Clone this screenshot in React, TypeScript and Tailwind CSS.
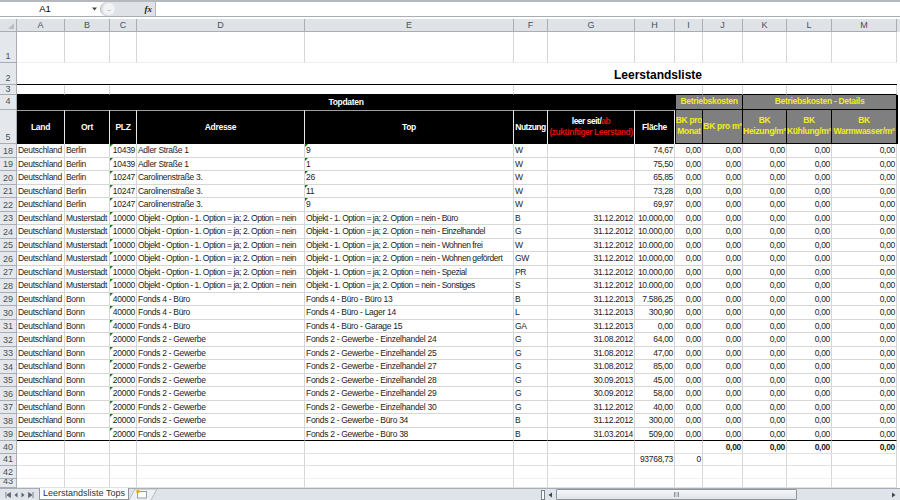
const COLS = ["A", "B", "C", "D", "E", "F", "G", "H", "I", "J", "K", "L", "M"];

const OPT = "Objekt - Option - 1. Option = ja; 2. Option = nein";
const OPT_TOP = "Objekt - 1. Option = ja; 2. Option = nein - ";

// nr, ort, plz, adresse, top, nutzung, leer seit, flaeche
const ROWS: [number, string, string, string, string, string, string, string][] = [
  [18, "Berlin", "10439", "Adler Straße 1", "9", "W", "", "74,67"],
  [19, "Berlin", "10439", "Adler Straße 1", "1", "W", "", "75,50"],
  [20, "Berlin", "10247", "Carolinenstraße 3.", "26", "W", "", "65,85"],
  [21, "Berlin", "10247", "Carolinenstraße 3.", "11", "W", "", "73,28"],
  [22, "Berlin", "10247", "Carolinenstraße 3.", "9", "W", "", "69,97"],
  [23, "Musterstadt", "10000", OPT, OPT_TOP + "Büro", "B", "31.12.2012", "10.000,00"],
  [24, "Musterstadt", "10000", OPT, OPT_TOP + "Einzelhandel", "G", "31.12.2012", "10.000,00"],
  [25, "Musterstadt", "10000", OPT, OPT_TOP + "Wohnen frei", "W", "31.12.2012", "10.000,00"],
  [26, "Musterstadt", "10000", OPT, OPT_TOP + "Wohnen gefördert", "GW", "31.12.2012", "10.000,00"],
  [27, "Musterstadt", "10000", OPT, OPT_TOP + "Spezial", "PR", "31.12.2012", "10.000,00"],
  [28, "Musterstadt", "10000", OPT, OPT_TOP + "Sonstiges", "S", "31.12.2012", "10.000,00"],
  [29, "Bonn", "40000", "Fonds 4 - Büro", "Fonds 4 - Büro - Büro 13", "B", "31.12.2013", "7.586,25"],
  [30, "Bonn", "40000", "Fonds 4 - Büro", "Fonds 4 - Büro - Lager 14", "L", "31.12.2013", "300,90"],
  [31, "Bonn", "40000", "Fonds 4 - Büro", "Fonds 4 - Büro - Garage 15", "GA", "31.12.2013", "0,00"],
  [32, "Bonn", "20000", "Fonds 2 - Gewerbe", "Fonds 2 - Gewerbe - Einzelhandel 24", "G", "31.08.2012", "64,00"],
  [33, "Bonn", "20000", "Fonds 2 - Gewerbe", "Fonds 2 - Gewerbe - Einzelhandel 25", "G", "31.08.2012", "47,00"],
  [34, "Bonn", "20000", "Fonds 2 - Gewerbe", "Fonds 2 - Gewerbe - Einzelhandel 27", "G", "31.08.2012", "85,00"],
  [35, "Bonn", "20000", "Fonds 2 - Gewerbe", "Fonds 2 - Gewerbe - Einzelhandel 28", "G", "30.09.2013", "45,00"],
  [36, "Bonn", "20000", "Fonds 2 - Gewerbe", "Fonds 2 - Gewerbe - Einzelhandel 29", "G", "30.09.2012", "58,00"],
  [37, "Bonn", "20000", "Fonds 2 - Gewerbe", "Fonds 2 - Gewerbe - Einzelhandel 30", "G", "31.12.2012", "40,00"],
  [38, "Bonn", "20000", "Fonds 2 - Gewerbe", "Fonds 2 - Gewerbe - Büro 34", "B", "31.12.2012", "300,00"],
  [39, "Bonn", "20000", "Fonds 2 - Gewerbe", "Fonds 2 - Gewerbe - Büro 38", "B", "31.03.2014", "509,00"],
];

function RowNo({ n, end = true, flush }: { n: number; end?: boolean; flush?: boolean }) {
  return (
    <div
      className={`flex justify-center border-r border-b border-[#a9aeb4] bg-[#e4e8ec] text-[9px] leading-[9px] text-[#44505c] overflow-hidden ${
        end ? "items-end" : "items-center"
      } ${flush ? "" : "pb-[1px]"}`}
    >
      {n}
    </div>
  );
}

function Cell({
  children,
  right,
  bold,
  mark,
  tight,
  bottom = "border-b-[#d6d6d6]",
}: {
  children?: React.ReactNode;
  right?: boolean;
  bold?: boolean;
  mark?: boolean;
  tight?: boolean;
  bottom?: string;
}) {
  return (
    <div
      className={`relative flex items-center overflow-hidden whitespace-nowrap border-b border-r border-r-[#d6d6d6] px-[1px] text-[8.5px] leading-none text-[#1c1c1c] ${bottom} ${
        right ? "justify-end" : ""
      } ${bold ? "font-bold" : ""} ${tight ? "tracking-[-0.45px]" : "tracking-[-0.3px]"}`}
    >
      {mark && (
        <span className="absolute left-0 top-0 border-t-[3px] border-r-[3px] border-t-[#0b7a12] border-r-transparent" />
      )}
      {children}
    </div>
  );
}

function BlackHead({ children, tight }: { children: React.ReactNode; tight?: boolean }) {
  return (
    <div
      className={`flex flex-col items-center justify-center overflow-hidden border-r border-r-[#e8e8e8] border-t border-t-[#a0a0a0] bg-black text-center text-[8.5px] font-bold leading-[11px] text-white whitespace-nowrap ${
        tight ? "tracking-[-0.5px]" : "tracking-[-0.3px]"
      }`}
    >
      {children}
    </div>
  );
}

function GrayHead({ children, span = "" }: { children: React.ReactNode; span?: string }) {
  return (
    <div
      className={`flex flex-col items-center justify-center overflow-hidden border-r border-b border-black bg-[#7f7f7f] text-center text-[8.5px] font-bold leading-[11px] tracking-[-0.3px] text-[#f2ee1c] whitespace-nowrap ${span}`}
    >
      {children}
    </div>
  );
}

function EmptyRow({ n, cells, faint }: { n: number; cells?: Record<number, React.ReactNode>; faint?: boolean }) {
  const bottom = faint ? "border-b-[#f0f0f0]" : "border-b-[#e2e2e2]";
  return (
    <>
      <RowNo n={n} />
      {COLS.map((_, i) => (
        <Cell key={i} right bold={n === 40} bottom={bottom}>
          {cells?.[i]}
        </Cell>
      ))}
      <div />
    </>
  );
}

function FormulaBar() {
  return (
    <div className="flex h-[19px] shrink-0 flex-col bg-white">
      <div className="h-[2px] bg-[#b4b8bd]" />
      <div className="flex h-[14px] items-center">
        <div className="flex h-full w-[100px] items-center">
          <span className="w-[90px] text-center text-[9.5px] text-black">A1</span>
          <svg width="6" height="4" viewBox="0 0 6 4" className="ml-[2px]">
            <path d="M0 0.5h5L2.5 3.5z" fill="#444" />
          </svg>
        </div>
        <div className="flex h-full w-[55px] items-center justify-end rounded-l-full border-l border-[#b4b8bd] bg-[#dfe3e8] pr-[2px]">
          <span className="mr-auto ml-[2px] flex h-[12px] w-[12px] items-center justify-center rounded-full bg-[#f1f3f5] text-[7px] leading-none text-[#a5aab0]">
            –
          </span>
          <span className="pr-[1px] font-['Liberation_Serif',serif] text-[9px] font-bold italic leading-none text-[#222]">
            fx
          </span>
        </div>
        <div className="h-full flex-1 border-l border-[#b4b8bd]" />
      </div>
      <div className="h-[1px] bg-[#a8adb3]" />
    </div>
  );
}

function TabBar() {
  return (
    <div className="flex h-[12px] shrink-0 items-stretch border-t border-[#a9aeb4] bg-[#dfe4ea]">
      <div className="flex w-[39px] items-center justify-around px-[3px] text-[#5a6470]">
        <svg width="6" height="6" viewBox="0 0 6 6"><path d="M1 0v6M5.5 0.5v5L2 3z" stroke="currentColor" strokeWidth="0.8" fill="currentColor" /></svg>
        <svg width="4" height="6" viewBox="0 0 4 6"><path d="M3.5 0.5v5L0.5 3z" fill="currentColor" /></svg>
        <svg width="4" height="6" viewBox="0 0 4 6"><path d="M0.5 0.5v5L3.5 3z" fill="currentColor" /></svg>
        <svg width="6" height="6" viewBox="0 0 6 6"><path d="M5 0v6M0.5 0.5v5L4 3z" stroke="currentColor" strokeWidth="0.8" fill="currentColor" /></svg>
      </div>
      <div className="-mt-[1px] flex w-[90px] items-center justify-center whitespace-nowrap border-x border-b border-[#8f959c] bg-white text-[9px] font-medium leading-none text-[#2f343a]">
        Leerstandsliste Tops
      </div>
      <svg width="30" height="12" viewBox="0 0 30 12" className="-mt-[1px] shrink-0">
        <path d="M0 12L6 1h22l-6 11" fill="#eef1f4" stroke="#a9aeb4" strokeWidth="0.8" />
        <rect x="8.5" y="3.5" width="9" height="6.5" fill="#fff" stroke="#7d8b99" strokeWidth="0.8" />
        <circle cx="9" cy="3.5" r="1.8" fill="#e8a820" />
      </svg>
      <div className="flex-1" />
      <div className="flex w-[360px] items-center">
        <span className="ml-[1px] h-[10px] w-[4px] border border-[#7a8088] bg-white" />
        <svg width="5" height="6" viewBox="0 0 5 6" className="ml-[3px]"><path d="M4 0.5v5L0.5 3z" fill="#444" /></svg>
        <div className="ml-[3px] flex h-full w-[241px] items-center justify-center rounded-[1px] border border-[#8f959c] bg-gradient-to-b from-[#f6f7f9] to-[#dfe3e8]">
          <span className="h-[5px] w-[5px] border-x border-[#8f959c] bg-[#c9ced4]" />
        </div>
        <div className="flex-1" />
        <svg width="5" height="6" viewBox="0 0 5 6" className="mr-[4px]"><path d="M1 0.5v5L4.5 3z" fill="#444" /></svg>
      </div>
    </div>
  );
}

export default function App() {
  return (
    <div className="flex h-[500px] w-[900px] flex-col overflow-hidden bg-white font-['Liberation_Sans',Arial,sans-serif]">
      <FormulaBar />
      <div className="grid flex-1 grid-cols-[17px_48px_45px_27px_168px_209px_34px_87px_40px_28px_40px_44px_45px_65px_3px] grid-rows-[13px_31px_22px_10px_14.5px_34.5px_repeat(22,13.5px)_12.5px_12.5px_12.5px_9.5px] overflow-hidden">
        {/* column letters */}
        <div className="flex items-end justify-end border-r border-b border-[#a9aeb4] bg-[#dfe3e8] p-[2px]">
          <span className="border-b-[6px] border-l-[6px] border-b-[#b8bdc3] border-l-transparent" />
        </div>
        {COLS.map((c) => (
          <div
            key={c}
            className="flex items-center justify-center border-r border-b border-[#a9aeb4] bg-[#dfe3e8] text-[9px] leading-none text-[#44505c]"
          >
            {c}
          </div>
        ))}
        <div className="bg-[#dfe3e8]" />

        {/* row 1 */}
        <RowNo n={1} />
        {COLS.map((c) => (
          <Cell key={c} bottom="border-b-[#f0f0f0]" />
        ))}
        <div />

        {/* row 2 */}
        <RowNo n={2} />
        <div className="col-span-13 flex items-center justify-end border-b border-b-black pr-[195px] pt-[3px] text-[12px] font-bold leading-none text-black">
          Leerstandsliste
        </div>
        <div />

        {/* row 3 */}
        <RowNo n={3} flush />
        <Cell bottom="border-b-black" />
        <Cell bottom="border-b-black" />
        <div className="col-span-3 border-r border-b border-r-[#d6d6d6] border-b-black" />
        <div className="col-span-3 border-b border-b-black" />
        {["I", "J", "K", "L", "M"].map((c) => (
          <Cell key={c} bottom="border-b-black" />
        ))}
        <div />

        {/* row 4 */}
        <RowNo n={4} end={false} />
        <div className="col-span-8 flex items-center justify-center bg-black text-[8.5px] font-bold leading-none tracking-[-0.3px] text-white">
          Topdaten
        </div>
        <GrayHead span="col-span-2 border-l">Betriebskosten</GrayHead>
        <GrayHead span="col-span-3">Betriebskosten - Details</GrayHead>
        <div className="border-l border-black" />

        {/* row 5 */}
        <RowNo n={5} />
        <BlackHead>Land</BlackHead>
        <BlackHead>Ort</BlackHead>
        <BlackHead>PLZ</BlackHead>
        <BlackHead>Adresse</BlackHead>
        <BlackHead>Top</BlackHead>
        <BlackHead tight>Nutzung</BlackHead>
        <BlackHead tight>
          <span>
            leer seit/<span className="text-[#e01010]">ab</span>
          </span>
          <span className="text-[#e01010]">(zukünftiger Leerstand)</span>
        </BlackHead>
        <BlackHead>Fläche</BlackHead>
        <GrayHead span="border-l">
          <span>BK pro</span>
          <span>Monat</span>
        </GrayHead>
        <GrayHead>BK pro m²</GrayHead>
        <GrayHead>
          <span>BK</span>
          <span>Heizung/m²</span>
        </GrayHead>
        <GrayHead>
          <span>BK</span>
          <span>Kühlung/m²</span>
        </GrayHead>
        <GrayHead>
          <span>BK</span>
          <span>Warmwasser/m²</span>
        </GrayHead>
        <div className="border-l border-black" />

        {/* data */}
        {ROWS.map(([nr, ort, plz, adresse, top, nutzung, seit, flaeche]) => {
          const bottom = nr === 39 ? "border-b-black" : "border-b-[#d6d6d6]";
          const tight = nr >= 23 && nr <= 28;
          return (
            <div key={nr} className="contents">
              <RowNo n={nr} />
              <Cell bottom={bottom}>Deutschland</Cell>
              <Cell bottom={bottom}>{ort}</Cell>
              <Cell bottom={bottom} mark right>{plz}</Cell>
              <Cell bottom={bottom} tight={tight}>{adresse}</Cell>
              <Cell bottom={bottom} mark={nr <= 22} tight={tight}>{top}</Cell>
              <Cell bottom={bottom}>{nutzung}</Cell>
              <Cell bottom={bottom} right>{seit}</Cell>
              <Cell bottom={bottom} right>{flaeche}</Cell>
              <Cell bottom={bottom} right>0,00</Cell>
              <Cell bottom={bottom} right>0,00</Cell>
              <Cell bottom={bottom} right>0,00</Cell>
              <Cell bottom={bottom} right>0,00</Cell>
              <Cell bottom={bottom} right>0,00</Cell>
              <div />
            </div>
          );
        })}

        <EmptyRow n={40} cells={{ 9: "0,00", 10: "0,00", 11: "0,00", 12: "0,00" }} />
        <EmptyRow n={41} cells={{ 7: "93768,73", 8: "0" }} />
        <EmptyRow n={42} faint />
        <EmptyRow n={43} />
      </div>
      <TabBar />
    </div>
  );
}
